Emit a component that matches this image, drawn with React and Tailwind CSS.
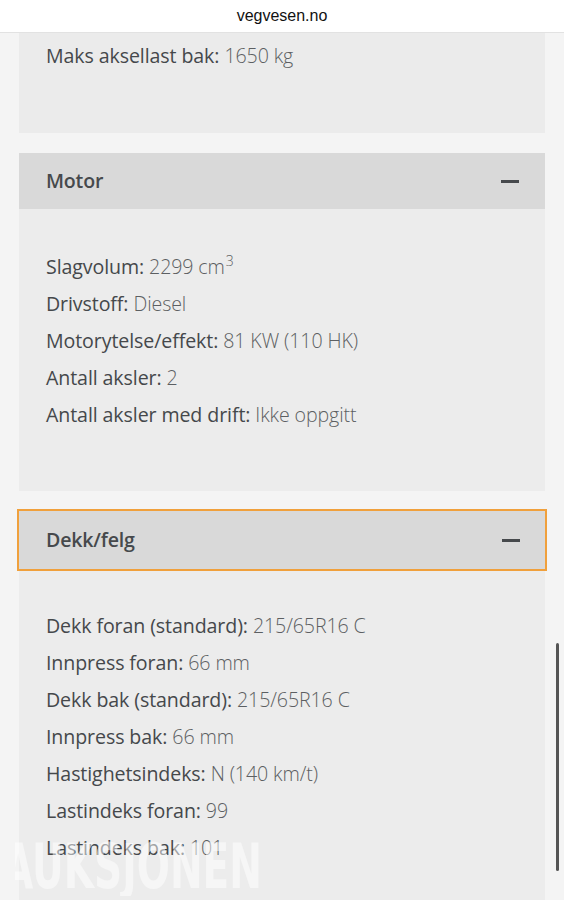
import { useState } from "react";

const motor = [
  ["Slagvolum:", "2299 cm", "3"],
  ["Drivstoff:", "Diesel"],
  ["Motorytelse/effekt:", "81 KW (110 HK)"],
  ["Antall aksler:", "2"],
  ["Antall aksler med drift:", "Ikke oppgitt"],
];

const dekk = [
  ["Dekk foran (standard):", "215/65R16 C"],
  ["Innpress foran:", "66 mm"],
  ["Dekk bak (standard):", "215/65R16 C"],
  ["Innpress bak:", "66 mm"],
  ["Hastighetsindeks:", "N (140 km/t)"],
  ["Lastindeks foran:", "99"],
  ["Lastindeks bak:", "101"],
];

const Row = ({ row }) => (
  <div className="h-[37px] flex items-center text-[19.6px] tracking-[-0.1px]">
    <span className="text-[#45484b] font-normal">{row[0]}</span>
    <span className="ml-[5px] text-[#5c5f62] font-light">
      {row[1]}
      {row[2] && <span className="text-[14px] relative -top-[8px] ml-[1px]">{row[2]}</span>}
    </span>
  </div>
);

const Section = ({ title, rows, focused }) => {
  const [open, setOpen] = useState(true);
  return (
    <div className="mt-[20px]">
      <button
        onClick={() => setOpen(!open)}
        className={`flex items-center justify-between bg-[#d9d9d9] text-left ${
          focused
            ? "h-[62px] -mx-[2px] w-[calc(100%+4px)] border-2 border-[#f0a03c] pl-[27px] pr-[25px]"
            : "w-full h-[56px] pl-[27px] pr-[26px]"
        }`}
      >
        <span className="text-[19.6px] font-semibold text-[#46494c] tracking-[-0.2px]">{title}</span>
        <span className="block w-[18px] h-[3px] bg-[#46494c]" />
      </button>
      {open && (
        <div className={`bg-[#ececec] px-[27px] pb-[58px] ${focused ? "pt-[36px]" : "pt-[39px]"}`}>
          {rows.map((r) => (
            <Row key={r[0]} row={r} />
          ))}
        </div>
      )}
    </div>
  );
};

export default function App() {
  return (
    <div
      className="relative w-[564px] h-[900px] overflow-hidden bg-[#f4f4f4]"
      style={{ fontFamily: "'Open Sans', Lato, sans-serif" }}
    >
      <div className="h-[33px] bg-white border-b border-[#e2e2e2] flex items-center justify-center">
        <span
          className="text-[16px] text-[#111]"
          style={{ fontFamily: "'Liberation Sans', Arial, sans-serif" }}
        >
          vegvesen.no
        </span>
      </div>

      <div className="mx-[19px]">
        <div className="bg-[#ebebeb] px-[27px] pt-[4px] h-[100px]">
          <Row row={["Maks aksellast bak:", "1650 kg"]} />
        </div>
        <Section title="Motor" rows={motor} />
        <div className="-mt-[2px]">
          <Section title="Dekk/felg" rows={dekk} focused />
        </div>
      </div>

      <div className="absolute right-[5px] top-[643px] h-[228px] w-[3px] rounded-full bg-[#555]" />

      <div className="absolute left-[15px] top-[836px] w-[300px] h-[60px] overflow-hidden pointer-events-none">
        <div
          className="absolute -left-[12px] top-0 text-[62px] leading-none font-bold text-white/50 scale-x-[0.63] origin-left whitespace-nowrap"
          style={{ fontFamily: "'DejaVu Sans', sans-serif" }}
        >
          AUKSJONEN
        </div>
      </div>
    </div>
  );
}
